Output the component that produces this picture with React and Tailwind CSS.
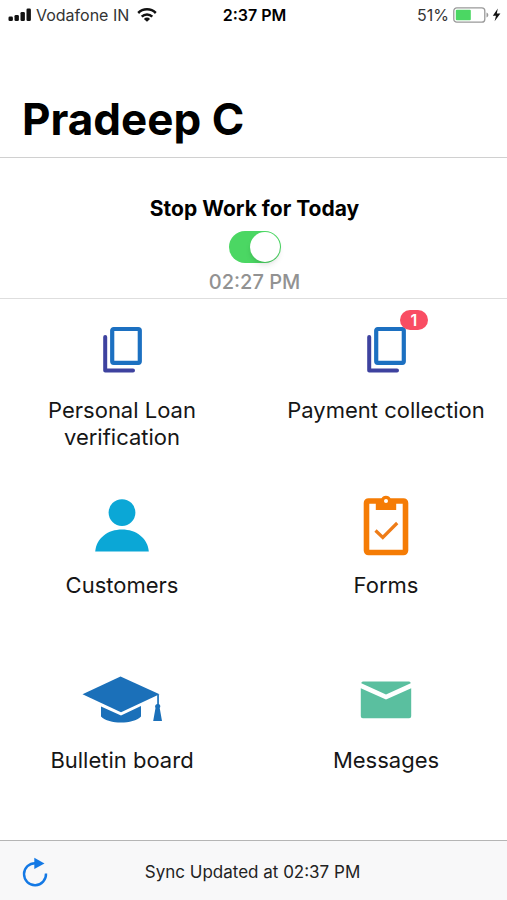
import React from 'react';

function SignalIcon() {
  return (
    <svg className="h-3.5 w-6" viewBox="0 0 24 14" fill="#111" aria-hidden="true">
      <rect x="0.5" y="8.5" width="4.4" height="4.5" rx="1.3" />
      <rect x="6.5" y="7" width="4.4" height="6" rx="1.3" />
      <rect x="12.5" y="4" width="4.4" height="9" rx="1.3" />
      <rect x="18.5" y="0.5" width="4.4" height="12.5" rx="1.3" />
    </svg>
  );
}

function WifiIcon() {
  return (
    <svg className="h-3.5 w-5" viewBox="0 0 20 14" fill="none" stroke="#111" strokeWidth="2.5" aria-hidden="true">
      <path d="M1.2 5a12.4 12.4 0 0 1 17.6 0" />
      <path d="M4.7 8.7a7.5 7.5 0 0 1 10.6 0" />
      <path d="M10 13.8 6.9 10.9a4.4 4.4 0 0 1 6.2 0z" fill="#111" stroke="none" />
    </svg>
  );
}

function BatteryIcon() {
  return (
    <svg className="h-4 w-12" viewBox="0 0 48 16" aria-hidden="true">
      <rect x="0.8" y="0.8" width="31" height="14.4" rx="3" fill="#fff" stroke="#999" strokeWidth="1.3" />
      <rect x="2.8" y="2.8" width="15" height="10.4" rx="1" fill="#4bd763" />
      <path d="M33.5 5.5c2.4 1 2.4 4 0 5z" fill="#999" />
      <path d="M44.8 1.5 39.8 8.8h3.2L41.6 14.2l5.8-7.6h-3.6z" fill="#111" />
    </svg>
  );
}

function PagesIcon() {
  return (
    <svg className="h-12 w-10" viewBox="0 0 40 48" fill="none" aria-hidden="true">
      <path d="M3.2 11v33.6H31" stroke="#3e429f" strokeWidth="4" strokeLinecap="round" strokeLinejoin="round" />
      <rect x="10.2" y="3" width="27.6" height="33.8" rx="1.5" stroke="#1c70c1" strokeWidth="4.2" />
    </svg>
  );
}

function PersonIcon() {
  return (
    <svg className="h-[53px] w-[54px]" viewBox="0 0 54 53" fill="#0ba7d6" aria-hidden="true">
      <circle cx="27" cy="13.6" r="13.4" />
      <path d="M0.2 52.5C1.5 39 13 30.6 27 30.6S52.5 39 53.8 52.5z" />
    </svg>
  );
}

function ClipboardIcon() {
  return (
    <svg className="h-[61px] w-[46px]" viewBox="0 0 46 61" fill="none" aria-hidden="true">
      <rect x="3.5" y="6" width="39" height="51.5" rx="2" stroke="#f57c05" strokeWidth="5.6" />
      <path d="M12.8 15V4h5.5a5 5 0 0 1 9.4 0h5.5v11z" fill="#f57c05" />
      <circle cx="23" cy="6" r="2" fill="#fff" />
      <path d="M12.5 35.5 19.8 42.5 34.2 28" stroke="#ee7c18" strokeWidth="3.2" />
    </svg>
  );
}

function CapIcon() {
  return (
    <svg className="h-12 w-20" viewBox="0 0 80 48" fill="#1b70b9" aria-hidden="true">
      <path d="M38.5 0.5 77.5 18.3 39 36.3.5 18.3z" />
      <path d="M19 30.5 39 39.5l20-9.5v10.5C51 48.5 27 48.5 19 40.5z" />
      <path d="M75.2 18.5h1.7V28a2.6 2.6 0 0 1 .8 4l2.3 13h-8.8l2.3-13a2.6 2.6 0 0 1 1.7-4z" />
    </svg>
  );
}

function EnvelopeIcon() {
  return (
    <svg className="h-[38px] w-[52px]" viewBox="0 0 52 38" fill="#5abf9f" aria-hidden="true">
      <path d="M3 .5h46a1.7 1.7 0 0 1 1.7 1.7L26 13.6 1.3 2.2A1.7 1.7 0 0 1 3 .5z" />
      <path d="M.8 7.2 26 18.4 51.2 7.2v28a2 2 0 0 1-2 2H2.8a2 2 0 0 1-2-2z" />
    </svg>
  );
}

function SyncIcon() {
  return (
    <svg className="h-[30px] w-[26px]" viewBox="0 0 26 30" fill="none" aria-hidden="true">
      <path d="M13.5 6.2A11 11 0 1 0 24 16.5" stroke="#1479e5" strokeWidth="2.4" />
      <path d="M12.3.8 22.5 6.5 12.3 12z" fill="#1479e5" />
    </svg>
  );
}

const tiles = [
  { label: 'Personal Loan verification', Icon: PagesIcon },
  { label: 'Payment collection', Icon: PagesIcon, badge: 1 },
  { label: 'Customers', Icon: PersonIcon },
  { label: 'Forms', Icon: ClipboardIcon },
  { label: 'Bulletin board', Icon: CapIcon },
  { label: 'Messages', Icon: EnvelopeIcon },
];

function Tile({ label, Icon, badge }) {
  return (
    <button type="button" className="flex h-[175px] flex-col items-center pt-[19px]">
      <span className="relative flex h-16 items-center justify-center">
        <Icon />
        {badge && (
          <span className="absolute -top-2 -right-[22px] flex h-5 w-7 items-center justify-center rounded-full bg-[#f94d63] text-base font-semibold text-white">
            {badge}
          </span>
        )}
      </span>
      <span className="mt-[15px] max-w-[210px] text-[22px] leading-[27px] text-[#161616]">{label}</span>
    </button>
  );
}

export default function App() {
  return (
    <div className="flex min-h-screen flex-col bg-white font-[Inter,'Liberation_Sans',sans-serif] text-black">
      <header className="border-b border-[#d0d0d0]">
        <div className="grid h-[30px] grid-cols-[1fr_auto_1fr] items-center pr-1.5 pl-2 text-base">
          <div className="flex items-center gap-1 text-[#333]">
            <SignalIcon />
            <span className="whitespace-nowrap">Vodafone IN</span>
            <span className="pl-1"><WifiIcon /></span>
          </div>
          <span className="font-semibold">2:37 PM</span>
          <div className="flex items-center justify-end gap-1 text-[#333]">
            <span>51%</span>
            <BatteryIcon />
          </div>
        </div>
        <h1 className="px-[22px] pt-[62px] pb-2.5 text-[44px] leading-[55px] font-bold">Pradeep C</h1>
      </header>

      <section className="flex h-[141px] flex-col items-center border-b border-[#dedede] pt-9 pl-0.5">
        <label htmlFor="work" className="text-[21px] leading-[30px] font-bold">Stop Work for Today</label>
        <span className="relative mt-[7px] flex h-8 w-[52px]">
          <input
            id="work"
            type="checkbox"
            role="switch"
            defaultChecked
            className="peer h-8 w-[52px] appearance-none rounded-full bg-gray-300 checked:bg-[#4bd763]"
          />
          <span className="pointer-events-none absolute top-px left-px size-[30px] rounded-full bg-white shadow-md peer-checked:left-[21px]" />
        </span>
        <span className="mt-1 text-[20px] leading-[30px] font-medium text-[#929292]">02:27 PM</span>
      </section>

      <main className="grid grid-cols-2 gap-x-[22px] pl-px">
        {tiles.map((tile) => (
          <Tile key={tile.label} {...tile} />
        ))}
      </main>

      <footer className="mt-auto grid h-[60px] grid-cols-[1fr_auto_1fr] items-center border-t border-[#b5b5b5] bg-[#f8f8f9] pt-0.5 pr-6 pl-[22px]">
        <button type="button" aria-label="Sync now" className="justify-self-start">
          <SyncIcon />
        </button>
        <p className="text-[17px] leading-6 text-[#222]">Sync Updated at 02:37 PM</p>
      </footer>
    </div>
  );
}
